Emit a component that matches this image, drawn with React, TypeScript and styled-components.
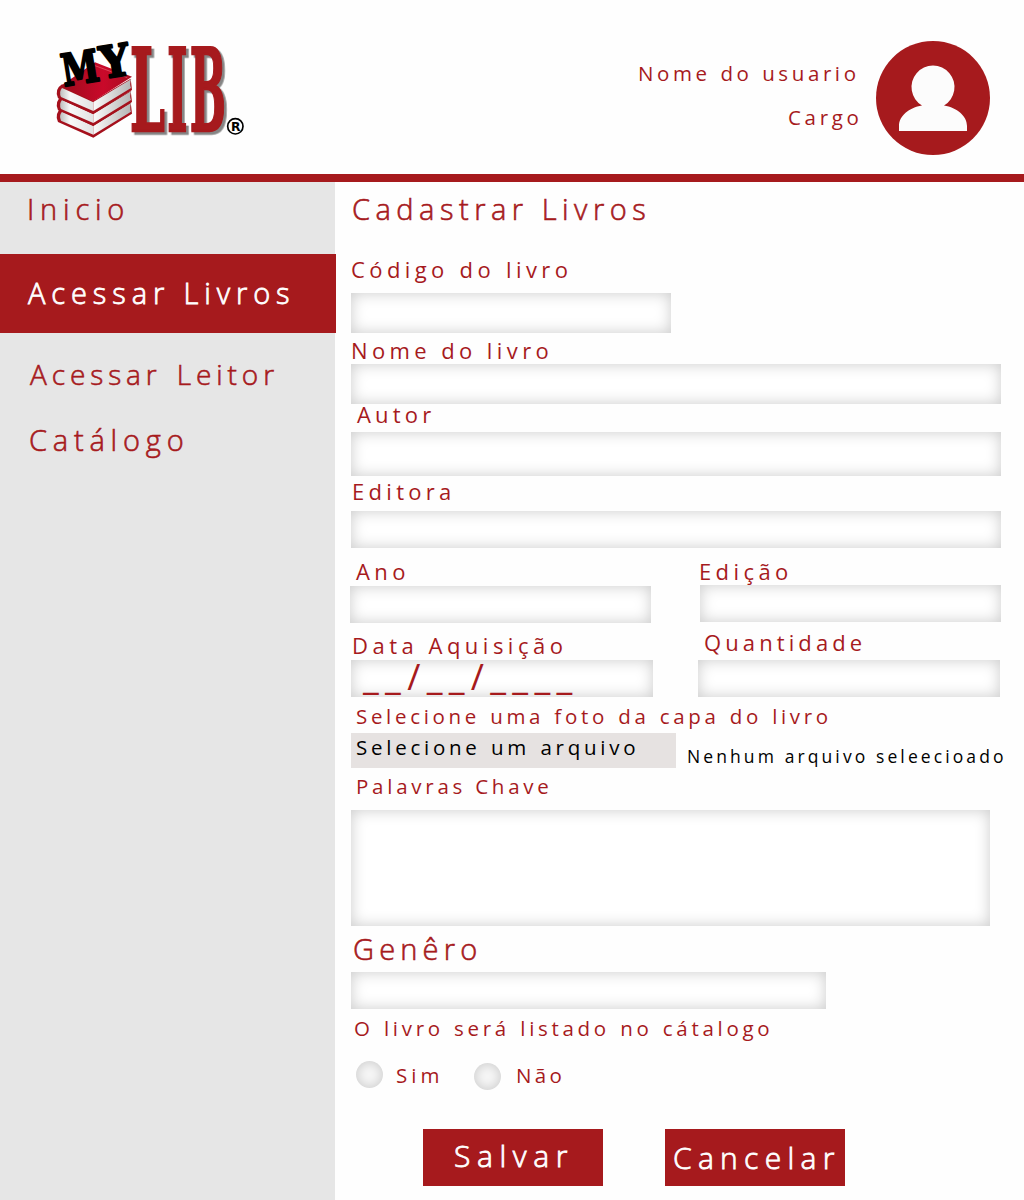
import React from "react";
import styled, { createGlobalStyle } from "styled-components";

const RED = "#a61a1d";

const GlobalStyle = createGlobalStyle`
  * { box-sizing: border-box; }
  body { margin: 0; background: #fefefe; font-family: "Open Sans", "Noto Sans", sans-serif; }
`;

const Page = styled.div`
  width: 1024px;
  height: 1200px;
  display: flex;
  flex-direction: column;
  overflow: hidden;
  background: #fefefe;
`;

const Header = styled.header`
  height: 182px;
  flex: none;
  display: flex;
  justify-content: space-between;
  border-bottom: 8px solid ${RED};
  padding: 30px 34px 0 40px;
`;

const LogoSvg = styled.svg`
  overflow: visible;
`;

const LogoLetters = styled.g`
  filter: drop-shadow(8px 8px 0 #858585);
`;

const User = styled.div`
  display: flex;
  padding-top: 11px;
`;

const UserText = styled.div`
  width: 238px;
  display: flex;
  flex-direction: column;
  padding-top: 22px;
`;

interface TextProps {
  $size?: number;
  $gap?: number;
  $word?: number;
  $top?: number;
  $left?: number;
  $line?: number;
  $color?: string;
  $light?: boolean;
}

const Text = styled.span<TextProps>`
  display: block;
  white-space: pre;
  font-size: ${(p) => p.$size ?? 22}px;
  line-height: ${(p) => p.$line ?? 20}px;
  height: ${(p) => p.$line ?? 20}px;
  letter-spacing: ${(p) => p.$gap ?? 4.4}px;
  word-spacing: ${(p) => p.$word ?? 0}px;
  margin-top: ${(p) => p.$top ?? 0}px;
  margin-left: ${(p) => p.$left ?? 0}px;
  color: ${(p) => p.$color ?? RED};
  font-weight: ${(p) => (p.$light ? 300 : 400)};
  -webkit-text-stroke: ${(p) => (p.$light ? 0.6 : 0)}px currentColor;
`;

const Body = styled.div`
  flex: 1;
  display: flex;
`;

const Sidebar = styled.nav`
  width: 335px;
  flex: none;
  background: #e6e6e6;
  display: flex;
  flex-direction: column;
`;

interface NavProps {
  $active?: boolean;
  $height: number;
  $left: number;
  $gap: number;
  $pad: number;
  $size?: number;
  $word?: number;
}

const NavItem = styled.a<NavProps>`
  width: ${(p) => (p.$active ? 336 : 335)}px;
  height: ${(p) => p.$height}px;
  padding: ${(p) => p.$pad}px 0 0 ${(p) => p.$left}px;
  background: ${(p) => (p.$active ? RED : "transparent")};
  color: ${(p) => (p.$active ? "#fff" : RED)};
  font-size: ${(p) => p.$size ?? 29}px;
  font-weight: 300;
  -webkit-text-stroke: ${(p) => (p.$active ? 0.8 : 0.6)}px currentColor;
  line-height: 40px;
  letter-spacing: ${(p) => p.$gap}px;
  word-spacing: ${(p) => p.$word ?? 0}px;
  white-space: pre;
`;

const Form = styled.form`
  width: 689px;
  display: flex;
  flex-direction: column;
  align-items: flex-start;
  padding: 5px 0 0 16px;
`;

const Field = styled.div<{ $width: number; $height?: number; $top?: number; $left?: number }>`
  flex: none;
  width: ${(p) => p.$width}px;
  height: ${(p) => p.$height ?? 37}px;
  margin-top: ${(p) => p.$top ?? 0}px;
  margin-left: ${(p) => p.$left ?? 0}px;
  background: #fff;
  box-shadow: inset 0 0 15px rgba(0, 0, 0, 0.21);
`;

const Columns = styled.div`
  display: flex;
`;

const Column = styled.div<{ $width: number }>`
  width: ${(p) => p.$width}px;
  display: flex;
  flex-direction: column;
`;

const FileButton = styled.div`
  width: 325px;
  height: 35px;
  background: #e6e2e1;
  padding: 4px 0 0 5px;
`;

const FileRow = styled.div`
  display: flex;
  margin-top: 7px;
`;

const Radios = styled.div`
  display: flex;
  align-items: flex-start;
  height: 44px;
  margin-top: 23px;
  padding-left: 5px;
`;

const Radio = styled.span<{ $top?: number }>`
  width: 27px;
  height: 27px;
  border-radius: 50%;
  margin-top: ${(p) => p.$top ?? 0}px;
  background: #f9f9f9;
  box-shadow: inset 0 0 13px rgba(0, 0, 0, 0.2);
`;

const RadioLabel = styled.div<{ $left: number }>`
  width: 91px;
  padding-left: ${(p) => p.$left}px;
`;

const Actions = styled.div`
  display: flex;
  gap: 62px;
  margin: 24px 0 0 72px;
`;

const Button = styled.button<{ $left: number; $top: number; $gap: number }>`
  width: 180px;
  height: 57px;
  border: 0;
  background: ${RED};
  color: #fff;
  display: flex;
  padding: ${(p) => p.$top}px 0 0 ${(p) => p.$left}px;
  font: 300 30px/40px "Open Sans", "Noto Sans", sans-serif;
  -webkit-text-stroke: 0.8px currentColor;
  letter-spacing: ${(p) => p.$gap}px;
`;

function Book({ y }: { y: number }) {
  return (
    <g transform={`translate(0 ${y})`}>
      <path d="M66 163Q42 178 54 205L160 252L276 180L272 146L160 212Z" fill="#a5101c" />
      <path d="M66 174Q56 186 63 201L160 243V217L78 179Z" fill="url(#pagesLeft)" />
      <path d="M160 216L274 147Q268 161 273 174L160 243Z" fill="url(#pagesRight)" />
    </g>
  );
}

function Logo() {
  return (
    <LogoSvg width="220" height="120" viewBox="0 0 660 360">
      <defs>
        <linearGradient id="pagesLeft">
          <stop offset="0" stopColor="#bdbdbd" />
          <stop offset=".3" stopColor="#f8f8f8" />
          <stop offset="1" stopColor="#e2e2e2" />
        </linearGradient>
        <linearGradient id="pagesRight">
          <stop offset="0" stopColor="#fafafa" />
          <stop offset="1" stopColor="#b4b4b4" />
        </linearGradient>
        <linearGradient id="cover">
          <stop offset="0" stopColor="#9c0c1c" />
          <stop offset=".6" stopColor="#c9092a" />
          <stop offset="1" stopColor="#a80d20" />
        </linearGradient>
      </defs>
      <Book y={71} />
      <Book y={36} />
      <Book y={0} />
      <path d="M62 168L165 97L276 140L160 214Z" fill="url(#cover)" />
      <path d="M165 107L262 143" stroke="#e04458" strokeWidth="3" />
      <LogoLetters
        fill={RED}
        stroke={RED}
        strokeWidth="7"
        fontFamily="DejaVu Serif, serif"
        fontWeight="700"
        fontSize="342"
      >
        <text x="269" y="304" textLength="106" lengthAdjust="spacingAndGlyphs">L</text>
        <text x="381" y="304" textLength="62" lengthAdjust="spacingAndGlyphs">I</text>
        <text x="449" y="304" textLength="109" lengthAdjust="spacingAndGlyphs">B</text>
      </LogoLetters>
      <g fontFamily="DejaVu Serif, serif" fontWeight="700" fontSize="132" stroke="#000" strokeWidth="7" strokeLinejoin="round">
        <text transform="translate(72 169) rotate(-9)" textLength="112" lengthAdjust="spacingAndGlyphs">M</text>
        <text transform="translate(188 146) rotate(-9)" textLength="88" lengthAdjust="spacingAndGlyphs">Y</text>
      </g>
      <circle cx="586" cy="289" r="23" fill="none" stroke="#000" strokeWidth="5" />
      <text x="573" y="303" fontFamily="DejaVu Sans, sans-serif" fontWeight="700" fontSize="37">R</text>
    </LogoSvg>
  );
}

function Avatar() {
  return (
    <svg width="114" height="114" viewBox="0 0 114 114">
      <circle cx="57" cy="57" r="57" fill={RED} />
      <path
        d="M23 90V85C23 75 33 66.500 46 64.500A21.500 21.500 0 1 1 68 64.500C81 66.500 91 75 91 85V90Z"
        fill="#fcfcfc"
      />
    </svg>
  );
}

export default function App() {
  return (
    <Page>
      <GlobalStyle />
      <Header>
        <Logo />
        <User>
          <UserText>
            <Text $size={20.5} $gap={3.6} $word={0.8}>Nome do usuario</Text>
            <Text $size={20.5} $gap={3.7} $top={24} $left={150}>Cargo</Text>
          </UserText>
          <Avatar />
        </User>
      </Header>
      <Body>
        <Sidebar>
          <NavItem $height={72} $left={27} $gap={5.8} $pad={7}>Inicio</NavItem>
          <NavItem $active $height={79} $left={28} $gap={5.9} $pad={19}>Acessar Livros</NavItem>
          <NavItem $height={79} $left={30} $gap={4.9} $word={3} $pad={21} $size={28}>Acessar Leitor</NavItem>
          <NavItem $height={60} $left={29} $gap={5.8} $pad={8}>Catálogo</NavItem>
        </Sidebar>
        <Form>
          <Text $light $size={29} $line={44} $gap={5.5} $left={1}>Cadastrar Livros</Text>
          <Text $top={25} $line={26} $gap={4.4} $word={0.8}>Código do livro</Text>
          <Field $top={11} $width={320} $height={40} />
          <Text $top={7}>Nome do livro</Text>
          <Field $top={4} $width={650} $height={40} />
          <Text $left={6} $gap={4.2}>Autor</Text>
          <Field $top={8} $width={650} $height={44} />
          <Text $top={5} $left={1} $gap={4.3}>Editora</Text>
          <Field $top={10} $width={650} />
          <Columns>
            <Column $width={347}>
              <Text $top={13} $left={5}>Ano</Text>
              <Field $top={5} $left={-1} $width={301} />
              <Text $top={12} $left={1} $gap={4.5}>Data Aquisição</Text>
              <Field $top={5} $width={302}>
                <Text $size={36} $gap={6.3} $line={33} $left={12}>__/__/____</Text>
              </Field>
            </Column>
            <Column $width={303}>
              <Text $top={13} $left={1}>Edição</Text>
              <Field $top={4} $left={2} $width={301} />
              <Text $top={10} $left={6} $gap={4.1}>Quantidade</Text>
              <Field $top={8} $width={302} />
            </Column>
          </Columns>
          <Text $top={9} $left={5} $size={20.5} $gap={3.68} $word={1.2}>Selecione uma foto da capa do livro</Text>
          <FileRow>
            <FileButton>
              <Text $size={20.5} $gap={3.75} $word={1.3} $color="#000">Selecione um arquivo</Text>
            </FileButton>
            <Text $size={17.5} $gap={3.1} $color="#000" $top={13} $left={11}>Nenhum arquivo seleecioado</Text>
          </FileRow>
          <Text $top={8} $left={5} $size={20.5} $gap={3.75}>Palavras Chave</Text>
          <Field $top={14} $width={639} $height={116} />
          <Text $light $top={8} $left={2} $size={29} $line={30} $gap={5.2}>Genêro</Text>
          <Field $top={8} $width={475} />
          <Text $top={9} $left={3} $size={20.5} $gap={3.7} $word={1.3}>O livro será listado no cátalogo</Text>
          <Radios>
            <Radio />
            <RadioLabel $left={13}>
              <Text $top={4} $size={20.5} $gap={4.1}>Sim</Text>
            </RadioLabel>
            <Radio $top={2} />
            <RadioLabel $left={15}>
              <Text $top={4} $size={20.5} $gap={3.3}>Não</Text>
            </RadioLabel>
          </Radios>
          <Actions>
            <Button type="button" $left={31} $top={7} $gap={6.6}>Salvar</Button>
            <Button type="button" $left={8} $top={9} $gap={6.3}>Cancelar</Button>
          </Actions>
        </Form>
      </Body>
    </Page>
  );
}
